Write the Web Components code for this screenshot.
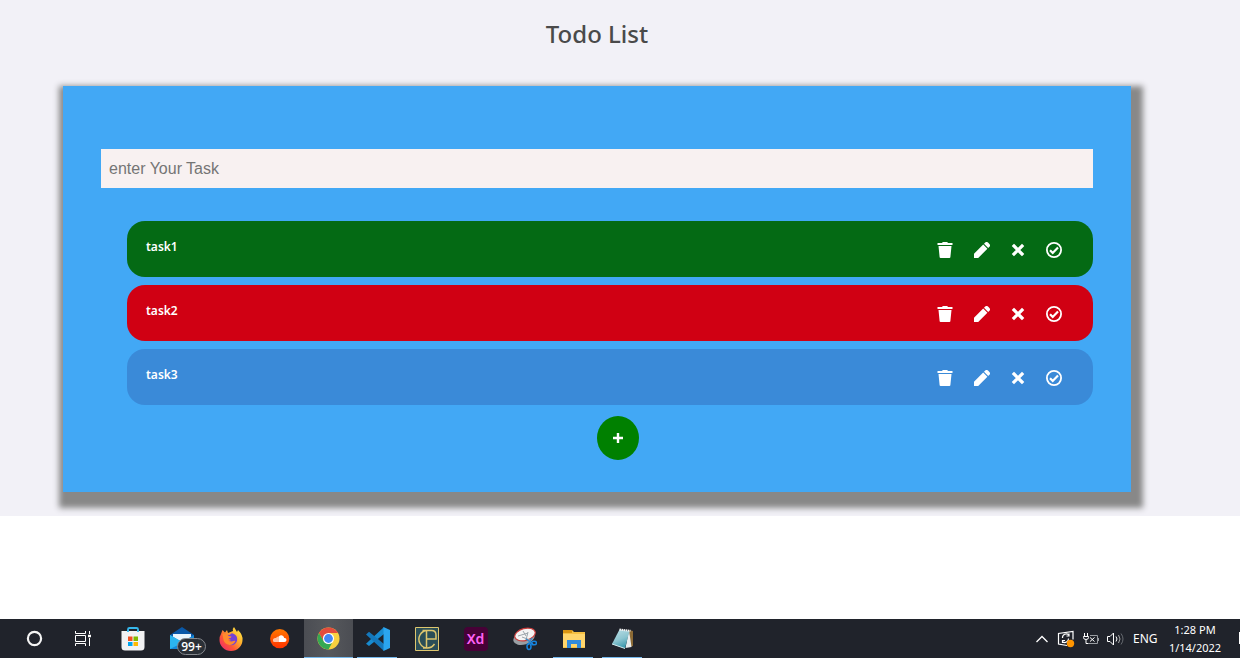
<!DOCTYPE html>
<html lang="en">
<head>
<meta charset="utf-8">
<meta name="viewport" content="width=device-width, initial-scale=1">
<title>Todo List</title>
<style>
  body { margin: 0; background: #fff; font-family: "Noto Sans", "Open Sans", sans-serif; }
</style>
</head>
<body>
<todo-desktop></todo-desktop>

<script>
// Builds an element class whose shadow root is cloned from a template string.
function define(name, html, setup) {
  const template = document.createElement('template');
  template.innerHTML = html;
  customElements.define(name, class extends HTMLElement {
    constructor() {
      super();
      this.attachShadow({ mode: 'open' }).append(template.content.cloneNode(true));
    }
    connectedCallback() { if (setup) setup(this, this.shadowRoot); }
  });
}

define('icon-button', `
  <style>
    :host { display: block; }
    button { display: grid; place-items: center; width: 36px; height: 36px; padding: 0; border: 0; background: none; color: #fff; cursor: pointer; }
    ::slotted(svg) { display: block; }
  </style>
  <button type="button"><slot></slot></button>
`, (host, root) => root.querySelector('button').setAttribute('aria-label', host.getAttribute('label')));

define('todo-item', `
  <style>
    :host { display: flex; justify-content: space-between; box-sizing: border-box; height: 56px; padding: 11px 21px 9px 19px; border-radius: 18px; background: #3a8ad8; color: #fff; }
    :host([state="done"]) { background: #046a14; }
    :host([state="cancelled"]) { background: #d00013; }
    .name { font: 600 12px/30px "Noto Sans", "Open Sans", sans-serif; }
    .actions { display: flex; }
  </style>
  <span class="name"><slot></slot></span>
  <div class="actions">
    <icon-button label="Delete"><svg width="18" height="16" viewBox="0 0 18 16" fill="#fff"><path d="M.5 1H5L5.800 0h4.400l.8 1h4.500v2H.5zM1.500 4h13l-1.100 11a1 1 0 0 1-1 1H3.600a1 1 0 0 1-1-1z"/></svg></icon-button>
    <icon-button label="Edit"><svg width="16" height="16" viewBox="0 0 16 16" fill="#fff"><path d="M0 16v-4.200L9.200 2.600l4.200 4.200L4.200 16zM10 1.800 11.200.6a2 2 0 0 1 2.800 0L15.400 2a2 2 0 0 1 0 2.800L14.200 6z"/></svg></icon-button>
    <icon-button label="Cancel"><svg width="14" height="14" viewBox="0 0 14 14"><path d="m3 3 8 8M11 3l-8 8" stroke="#fff" stroke-width="3.200" stroke-linecap="square"/></svg></icon-button>
    <icon-button label="Complete"><svg width="16" height="16" viewBox="0 0 16 16" fill="none" stroke="#fff"><circle cx="8" cy="8" r="7.100" stroke-width="1.800"/><path d="m4 8.300 2.700 2.600L12 5.500" stroke-width="2.200"/></svg></icon-button>
  </div>
`);

define('todo-card', `
  <style>
    :host { display: block; padding: 63px 38px 32px; background: #42a8f5; box-shadow: 4px 8px 6px 8px #888; }
    input { display: block; width: 100%; height: 39px; box-sizing: border-box; padding: 0 8px; border: 0; border-radius: 0; background: #f8f1f1; color: #222; font: 16px "Liberation Sans", Arial, sans-serif; }
    input::placeholder { color: #757575; opacity: 1; }
    .list { display: grid; gap: 8px; margin: 33px 0 0 26px; }
    .foot { display: flex; justify-content: center; padding: 11px 0 0 42px; }
    .add { display: grid; place-items: center; width: 42px; height: 44px; padding: 0; border: 0; border-radius: 50%; background: #008000; cursor: pointer; }
  </style>
  <input type="text" placeholder="enter Your Task" aria-label="Task">
  <div class="list"><slot></slot></div>
  <div class="foot"><button class="add" type="button" aria-label="Add"><svg width="10" height="10" viewBox="0 0 10 10"><path d="M5 0v10M0 5h10" stroke="#fff" stroke-width="2.400"/></svg></button></div>
`);

define('task-app', `
  <style>
    :host { display: grid; place-items: center; position: relative; width: 49px; height: 39px; flex: none; }
    :host([active]) { background: linear-gradient(90deg, #4b4d53, #56585c 50%, #4b4d53); }
    :host([running])::after { content: ""; position: absolute; bottom: 0; left: 4px; right: 5px; height: 1px; background: #76b9ed; }
    :host([active])::after { left: 0; right: 0; }
    button { display: grid; place-items: center; width: 100%; height: 100%; padding: 0; border: 0; background: none; }
    .badge { position: absolute; left: 20px; top: 19px; }
  </style>
  <button type="button"><slot></slot></button>
  <span class="badge"><slot name="badge"></slot></span>
`, (host, root) => root.querySelector('button').setAttribute('aria-label', host.getAttribute('label')));

define('count-badge', `
  <style>
    :host { display: block; box-sizing: border-box; width: 29px; height: 17px; border: 1px solid #85888d; border-radius: 9px; background: #2b3037; color: #fff; font: 600 12px/15px "Open Sans", "Noto Sans", sans-serif; text-align: center; }
  </style>
  <slot></slot>
`);

define('xd-logo', `
  <style>
    :host { display: block; width: 24px; height: 24px; border-radius: 4px; background: #470137; color: #ff61f6; font: 600 14px/23px "Noto Sans", "Open Sans", sans-serif; text-align: center; }
  </style>
  <slot></slot>
`);

define('system-tray', `
  <style>
    :host { display: flex; align-items: center; height: 39px; color: #fff; font-size: 12px; }
    .icons { display: flex; align-items: center; gap: 8px; }
    svg { display: block; }
    .lang { width: 24px; margin-left: 9px; }
    .clock { width: 60px; margin: 0 14px 0 8px; font-size: 11px; line-height: 18px; text-align: center; white-space: nowrap; }
    .peek { width: 1px; height: 12px; background: #fff; margin-bottom: 2px; }
  </style>
  <div class="icons">
    <svg width="14" height="16" viewBox="0 0 14 16"><path d="m1.500 11 5.500-5.500 5.500 5.500" fill="none" stroke="#fff" stroke-width="1.300"/></svg>
    <svg width="18" height="18" viewBox="0 0 18 18" fill="none" stroke="#fff" stroke-width="1.200"><path d="M10 15.500 1.500 14V3.500L16 1.500v8M12 5a3.800 3.800 0 0 0-6.500 3M12 3.500V6H9.500M5.500 11.800a3.800 3.800 0 0 0 6-3.300M5.500 13v-2.500H8"/><circle cx="13.500" cy="13.500" r="3.700" fill="#ff9500" stroke="none"/></svg>
    <svg width="16" height="16" viewBox="0 0 16 16" fill="none" stroke="#fff"><path d="M1.500 2v3M4.500 2v3M.5 5.500h5v1q0 2-2.500 2-2.500 0-2.500-2zM3 8.500v4h2"/><path d="M7 4.500h7.500v8H5M15.500 7v3" stroke="#999da2"/><path d="m7 6.500 4.500 4M11.500 6.500 7 10.500"/></svg>
    <svg width="17" height="16" viewBox="0 0 17 16" fill="none" stroke="#fff"><path d="M.5 5.500H3l3.500-3.500v12L3 10.500H.5zM9 5.500q2 2.500 0 5"/><path d="M11.500 4q3 4 0 8" stroke="#aaa"/><path d="M14 2.500q4 5.500 0 11" stroke="#666a70"/></svg>
  </div>
  <span class="lang">ENG</span>
  <div class="clock"><div>1:28 PM</div><div>1/14/2022</div></div>
  <div class="peek"></div>
`);

define('desktop-taskbar', `
  <style>
    :host { display: flex; justify-content: space-between; height: 39px; background: #20232b; }
    .apps { display: flex; padding-left: 10px; }
    svg { display: block; }
  </style>
  <nav class="apps" aria-label="Apps">
    <task-app label="Cortana"><svg width="18" height="18" viewBox="0 0 18 18"><circle cx="8.500" cy="8.500" r="6.600" fill="none" stroke="#f4f4f4" stroke-width="2.200"/></svg></task-app>
    <task-app label="Task View"><svg width="20" height="18" viewBox="0 0 20 18" fill="none" stroke="#fff"><path d="M1.500 1v2.500h10V1M1.500 16v-2.500h10V16M1.500 5.500h10v6h-10zM15.500 1v3M15.500 8v8"/><path d="M14 6h3" stroke-width="2.500"/></svg></task-app>
    <task-app label="Store"><svg width="24" height="24" viewBox="0 0 24 24"><path d="M7 5V2.200Q7 1 8.500 1h7Q17 1 17 2.200V5" fill="none" stroke="#36b8ed" stroke-width="1.800"/><path d="M.5 4h23v16q0 3.500-3.500 3.500H4Q.5 23.500.5 20z" fill="#f2f2f3"/><path d="M7 3v2M17 3v2" stroke="#36b8ed" stroke-width="1.800"/><path d="M7 9.500h4.500V14H7z" fill="#f25022"/><path d="M12.500 9.500H17V14h-4.500z" fill="#7fba00"/><path d="M7 15h4.500v4H7z" fill="#00a4ef"/><path d="M12.500 15H17v4h-4.500z" fill="#ffb900"/></svg></task-app>
    <task-app label="Mail"><svg width="24" height="24" viewBox="0 0 24 24"><path d="m0 8 12-8 12 8v3H0z" fill="#0a58a8"/><path d="M3 7h18v10H3z" fill="#e9f5fd"/><path d="m0 8 12 7 12-7v14H0z" fill="#1689d8"/><path d="m0 8 13 7.500L0 22z" fill="#2bb5ef"/></svg><count-badge slot="badge">99+</count-badge></task-app>
    <task-app label="Firefox"><svg width="24" height="24" viewBox="0 0 24 24"><defs><linearGradient id="fx" x1="1" y1="0" x2="0" y2="1"><stop offset="0" stop-color="#fff44f"/><stop offset=".35" stop-color="#ffb52e"/><stop offset=".65" stop-color="#ff5637"/><stop offset="1" stop-color="#e92079"/></linearGradient></defs><path d="M2 7 3.500 3 6 5.500 8 3l1 3 5-2q-1-2 1-4l3 5 1-2q5 5 4.500 10a11.500 11 0 0 1-23 0Q.5 9 2 7z" fill="url(#fx)"/><path d="M7 10q2-3 4-2 1-3 4-1 4 2 3 7-2 5-7 4-4-1-4-5 3 2 5 0z" fill="#7542d5"/><path d="M3.500 7q3-1 5 0l1 2 3 .5q0 1.500-3 2-1 3 3 3 3-1 4-.5-2 4-6 4-5-1-6-5z" fill="#ff8b2e"/></svg></task-app>
    <task-app label="SoundCloud"><svg width="20" height="20" viewBox="0 0 20 20"><defs><linearGradient id="sc" x2="0" y2="1"><stop stop-color="#ff7700"/><stop offset="1" stop-color="#ff3300"/></linearGradient></defs><circle cx="9.700" cy="9.700" r="9.600" fill="url(#sc)"/><path d="M9 7.300q1.500-1.500 3.300-.8 1.700.6 1.900 2.600 2.300-.3 2.300 1.900 0 2-2.200 2H9z" fill="#fff"/><path d="M3 10.500V12q0 1 1.500 1H9V7.500q-2-.5-3 1.500-2.500-.5-3 1.500z" fill="#ffc3aa"/></svg></task-app>
    <task-app label="Chrome" active running><svg width="23" height="23" viewBox="0 0 24 24"><circle cx="12" cy="12" r="11.500" fill="#f9d13f"/><path d="M2 6.300A11.500 11.500 0 0 1 22 6.300H12L7 15z" fill="#e34c3d"/><path d="m2 6.300 5 8.600 8.500 2.100L12 23.500A11.500 11.500 0 0 1 2 6.300z" fill="#35a853"/><circle cx="12" cy="12" r="5.800" fill="#fff"/><circle cx="12" cy="12" r="4.600" fill="#4387f5"/></svg></task-app>
    <task-app label="VS Code" running><svg width="24" height="24" viewBox="0 0 24 24"><path d="M18 0v7L3 19l-3-2.300z" fill="#188bd0"/><path d="m0 7.500 3-2.700L18 17v7z" fill="#1478bc"/><path d="m17.500 0 6.500 3v18l-6.500 3z" fill="#2ba5ee"/></svg></task-app>
    <task-app label="Editor"><svg width="24" height="24" viewBox="0 0 24 24" fill="none" stroke="#dec66e"><path d="M.5.500h23v23H.5z" fill="#2b4e57"/><path d="M12 3.500A8.500 8.700 0 1 0 19.500 17M11.500 3v18M7.500 3.500h9q4.500 0 4.500 4.500v4H12M8 21h6" stroke-width="1.500"/></svg></task-app>
    <task-app label="Adobe XD"><xd-logo>Xd</xd-logo></task-app>
    <task-app label="Snipping Tool"><svg width="24" height="24" viewBox="0 0 24 24" fill="none"><ellipse cx="11" cy="11" rx="11" ry="6.500" transform="rotate(-17 11 11)" fill="#999fa4"/><ellipse cx="12" cy="7.500" rx="10.500" ry="6" transform="rotate(-15 12 7.500)" fill="#f4f4f4" stroke="#ca3d3c" stroke-width="1.200"/><path d="m5 9 10-3M10 4l3 5M9 10l8 3M15 5l-2 8" stroke="#9ba4aa"/><path d="m13 12 7 5M19 11l-4 7" stroke="#3188ce" stroke-width="1.500"/><ellipse cx="21" cy="16" rx="2.500" ry="1.800" stroke="#1684df" stroke-width="1.500"/><ellipse cx="16" cy="19.500" rx="2" ry="3" stroke="#1684df" stroke-width="1.500"/></svg></task-app>
    <task-app label="File Explorer" running><svg width="22" height="20" viewBox="0 0 22 20"><path d="M0 1h9l2 2h11v16H0z" fill="#f5c043"/><path d="M0 1h9v3H0z" fill="#d99412"/><path d="M0 5h22v13H0z" fill="#ffd56b"/><path d="M4 19v-8h14v8h-4v-4H8v4z" fill="#328bdc"/></svg></task-app>
    <task-app label="Notepad" running><svg width="24" height="24" viewBox="0 0 24 24"><defs><linearGradient id="np" x1=".3" y1="0" x2=".7" y2="1"><stop stop-color="#b5dbe3"/><stop offset=".5" stop-color="#8cc5d0"/><stop offset="1" stop-color="#3193a8"/></linearGradient></defs><path d="m18 3 4 1v15l-3 1z" fill="#8b6a35"/><path d="m18 3 2.500 17-6 1z" fill="#e9edee"/><path d="M8.500 2.500 18.500 4 14 21.500 1 17z" fill="url(#np)"/><path d="m1 17 13 4.500" stroke="#d4ebef"/><path d="m8.500 2.500 11 1.300" stroke="#f1f1f1" stroke-width="2" stroke-dasharray="1.500 .6"/></svg></task-app>
  </nav>
  <system-tray></system-tray>
`);

define('todo-desktop', `
  <style>
    :host { display: flex; flex-direction: column; justify-content: space-between; min-height: 100vh; }
    main { padding: 16px 109px 24px 63px; background: #f2f1f7; overflow: hidden; }
    h1 { margin: 0 0 34px; color: #4a4a4a; font: 500 24px/36px "Noto Sans", "Open Sans", sans-serif; text-align: center; }
  </style>
  <main>
    <h1>Todo List</h1>
    <todo-card>
      <todo-item state="done">task1</todo-item>
      <todo-item state="cancelled">task2</todo-item>
      <todo-item>task3</todo-item>
    </todo-card>
  </main>
  <desktop-taskbar></desktop-taskbar>
`);
</script>
</body>
</html>
